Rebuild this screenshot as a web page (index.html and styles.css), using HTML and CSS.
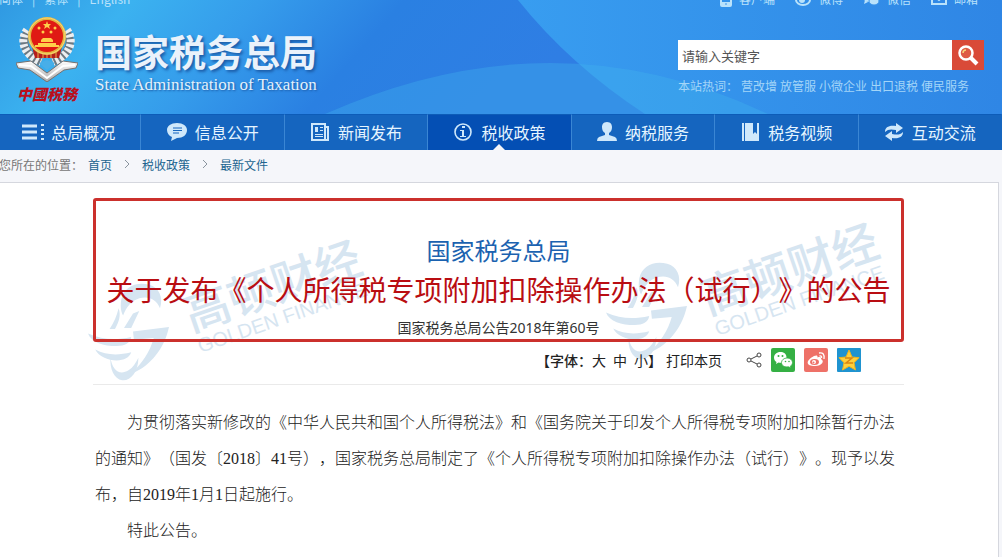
FILE: index.html
```html
<!DOCTYPE html>
<html lang="zh-CN">
<head>
    <meta charset="UTF-8">
    <meta name="viewport" content="width=device-width, initial-scale=1.0">
    <title>国家税务总局</title>
    <link rel="stylesheet" href="styles.css">
</head>
<body>

    <header class="header">
        <svg class="header-bg" viewBox="0 0 1002 114" preserveAspectRatio="none" aria-hidden="true">
            <defs>
                <linearGradient id="sky" x1="0" x2="1" y1="0" y2="0.1">
                    <stop offset="0" stop-color="#3099e2"/>
                    <stop offset="0.13" stop-color="#3bb2f0"/>
                    <stop offset="0.26" stop-color="#359ceb"/>
                    <stop offset="0.4" stop-color="#2a80e2"/>
                    <stop offset="0.6" stop-color="#2f7ee4"/>
                </linearGradient>
                <linearGradient id="sky2" x1="0" x2="1" y1="0" y2="0">
                    <stop offset="0" stop-color="#389df0"/>
                    <stop offset="1" stop-color="#2f86e5"/>
                </linearGradient>
            </defs>
            <rect width="1002" height="114" fill="url(#sky)"/>
            <path d="M518 0Q570 65 645 114H1002V0Z" fill="url(#sky2)"/>
            <path d="M325 114Q440 63 550 63Q660 63 768 114Z" fill="#42b4ee" opacity="0.35"/>
        </svg>

        <div class="topbar">
            <div class="langs">
                <a href="#">简体</a><span>|</span><a href="#">繁体</a><span>|</span><a href="#">English</a>
            </div>
            <div class="apps">
                <a href="#">
                    <svg width="12" height="16" viewBox="0 0 12 16"><rect x="1" y="1" width="10" height="14" rx="1" fill="none" stroke="currentColor" stroke-width="2"/><path d="M1 11h10v3H1z" fill="currentColor"/><path d="M5 13h2" stroke="#3a94ea"/></svg>客户端</a>
                <a href="#">
                    <svg width="17" height="16" viewBox="0 0 17 16"><ellipse cx="8" cy="9" rx="7" ry="5" fill="none" stroke="currentColor" stroke-width="2"/><circle cx="7" cy="9" r="3" fill="currentColor"/><path d="M11 1q5 0 5 5" fill="none" stroke="currentColor" stroke-width="2"/></svg>微博</a>
                <a href="#">
                    <svg width="17" height="16" viewBox="0 0 17 16"><ellipse cx="6" cy="6" rx="6" ry="5" fill="currentColor"/><path d="M2 9l-1 4 4-2z" fill="currentColor"/><ellipse cx="11" cy="10" rx="5" ry="4" fill="currentColor" stroke="#3a94ea"/></svg>微信</a>
                <a href="#">
                    <svg width="16" height="16" viewBox="0 0 16 16"><path d="M1 2h14v11H1zM1 3l7 6 7-6" fill="none" stroke="currentColor" stroke-width="2"/></svg>邮箱</a>
            </div>
        </div>

        <div class="brand">
            <div class="emblem">
                <svg width="62" height="66" viewBox="0 0 62 66" aria-hidden="true">
                    <defs>
                        <linearGradient id="silver" x1="0" x2="0" y1="0" y2="1">
                            <stop offset="0" stop-color="#ffffff"/>
                            <stop offset="1" stop-color="#a9a6a6"/>
                        </linearGradient>
                    </defs>
                    <!-- wheat ears -->
                    <g fill="none" stroke="#6d7880" stroke-width="8">
                        <path d="M12 15C4 26 9 39 25 46"/>
                        <path d="M50 15C58 26 53 39 37 46"/>
                    </g>
                    <g fill="none" stroke="#eceef0" stroke-width="8" stroke-dasharray="3 2">
                        <path d="M11 14C3 25 8 39 25 46"/>
                        <path d="M51 14C59 25 54 39 37 46"/>
                    </g>
                    <path d="M16 31h30l-3 11H19z" fill="#b51d1c"/>
                    <path d="M22 35v7M27 36v6M31 36v6M35 36v6M40 35v7" stroke="#e8b34d"/>
                    <circle cx="31" cy="20" r="19" fill="#e4b43f"/>
                    <circle cx="31" cy="20" r="18" fill="none" stroke="#f6d979"/>
                    <circle cx="31" cy="20" r="16" fill="#e01a14"/>
                    <g fill="#ffcf4a">
                        <path d="M31 5l1 3h3l-2 2 1 3-3-2-3 2 1-3-2-2h3z"/>
                        <circle cx="23" cy="12" r="1.5"/>
                        <circle cx="39" cy="12" r="1.5"/>
                        <circle cx="27" cy="16" r="1.5"/>
                        <circle cx="35" cy="16" r="1.5"/>
                        <path d="M25 24l2-2h8l2 2v2H25zM22 27h18v2h3v2H19v-2h3z"/>
                    </g>
                    <!-- ribbon -->
                    <path d="M0 47l15-2 16 12 16-12 15 2-2 5-12 2-17 12L14 54 2 52z" fill="url(#silver)" stroke="#77706d"/>
                    <path d="M3 49l12 1 16 12 16-12 12-1" fill="none" stroke="#fff" stroke-width="2"/>
                    <path d="M23 47l8-3 8 3-8 7z" fill="#48aee8"/>
                </svg>
                <span class="emblem-text">中國税務</span>
            </div>
            <div class="site-name">
                <h1>国家税务总局</h1>
                <p>State Administration of Taxation</p>
            </div>
            <div class="search">
                <form class="search-form" onsubmit="return false">
                    <input type="text" aria-label="搜索" placeholder="请输入关键字">
                    <button type="submit" aria-label="搜索">
                        <svg width="22" height="22" viewBox="0 0 22 22"><path d="M13 13l7 7" stroke="#fff" stroke-width="4"/><circle cx="9" cy="9" r="6.500" fill="#de5b45" stroke="#fff" stroke-width="2.5"/><path d="M6 9q0-3 3-3" fill="none" stroke="#f6d67c" stroke-width="1.5"/></svg>
                    </button>
                </form>
                <div class="hot">
                    <span>本站热词：</span>
                    <a href="#">营改增</a>
                    <a href="#">放管服</a>
                    <a href="#">小微企业</a>
                    <a href="#">出口退税</a>
                    <a href="#">便民服务</a>
                </div>
            </div>
        </div>
    </header>

    <nav class="nav">
        <a href="#">
            <svg viewBox="0 0 24 20"><path d="M1 4h15M1 10h15M1 16h15" stroke="currentColor" stroke-width="3"/><path d="M20 3h3M20 8h3M20 12h3M20 17h3" stroke="currentColor" stroke-width="2"/></svg>总局概况</a>
        <a href="#">
            <svg viewBox="0 0 24 20"><path d="M12 1c6 0 10 3 10 7 0 5-4 8-10 8l-6 3 1-4c-3-1-5-4-5-7 0-4 4-7 10-7z" fill="currentColor"/><path d="M8 6h9M8 8.500h9M8 11h6" stroke="#1565bf"/></svg>信息公开</a>
        <a href="#">
            <svg viewBox="0 0 24 20"><path d="M4 2h13v16H4zM17 5h3v13h-4" fill="none" stroke="currentColor" stroke-width="2"/><path d="M7 5h3v5H7zM12 5h3v1h-3zM12 8h3v1h-3zM7 12h8v1H7zM7 14h8v1H7z" fill="currentColor"/></svg>新闻发布</a>
        <a href="#" class="active">
            <svg viewBox="0 0 24 20"><circle cx="12" cy="10" r="8" fill="none" stroke="currentColor" stroke-width="1.600"/><path d="M11 4h3v2h-3zM9 8h4v6h2v1H9v-1h2V9H9z" fill="currentColor"/></svg>税收政策</a>
        <a href="#">
            <svg viewBox="0 0 24 20"><path d="M12 0c4 0 5 3 5 5 0 3-1 5-3 6v2l6 2q2 1 2 4H2q0-3 2-4l6-2v-2C8 10 7 8 7 5c0-2 1-5 5-5z" fill="currentColor"/></svg>纳税服务</a>
        <a href="#">
            <svg viewBox="0 0 24 20"><path d="M4 1h2v18H4zM7 1h8v11l2-2 2 2V1h2v18H7z" fill="currentColor"/></svg>税务视频</a>
        <a href="#">
            <svg viewBox="0 0 24 20"><path d="M3 10c0-5 4-7 11-6V1l7 5-7 5V8c-5-1-8-1-11 2zM21 10c0 5-4 7-11 6v3l-7-5 7-5v3c5 1 8 1 11-2z" fill="currentColor"/></svg>互动交流</a>
    </nav>

    <div class="crumbs">
        <span>您所在的位置：</span>
        <a href="#">首页</a>
        <svg width="6" height="10" viewBox="0 0 6 10"><path d="M1 1l4 4-4 4" fill="none" stroke="#8a949e"/></svg>
        <a href="#">税收政策</a>
        <svg width="6" height="10" viewBox="0 0 6 10"><path d="M1 1l4 4-4 4" fill="none" stroke="#8a949e"/></svg>
        <a href="#">最新文件</a>
    </div>

    <main class="panel">
        <article class="article">
            <!-- watermarks -->
            <svg class="watermark" width="820" height="200" viewBox="0 0 820 200" aria-hidden="true">
                <defs>
                    <g id="swirl">
                        <path d="M37 18C40 4 54-2 68 2c11 3 16 14 12 26C76 18 67 14 57 17c-9 3-14 9-18 19-3-5-3-12-2-18z"/>
                        <path d="M0 56c16 7 30 8 48 4-1 7-7 10-16 10C17 70 4 66 0 56z"/>
                        <path d="M8 74c12 6 24 7 40 3-2 6-8 9-16 9-10 0-20-4-24-12z"/>
                        <path d="M50 54l40-5c-6 28-25 46-44 53 14-12 23-26 27-41l-22 2z"/>
                        <path d="M25 83c2 14 10 20 20 14 5-3 8-8 11-14 0 16-9 26-18 25-9-1-14-13-13-25z"/>
                        <path d="M24 51c5-7 8-15 10-23 3 8 0 16-4 23zM40 50l10-16 7-3-9 19z"/>
                    </g>
                </defs>
                <g fill="#d6e5f1">
                    <use href="#swirl" transform="translate(0 85) scale(0.9)"/>
                    <g transform="translate(103 134) rotate(-19)">
                        <text class="mark-cn" x="0" y="0">高顿财经</text>
                        <text class="mark-en" x="2" y="23">GOLDEN FINANCE</text>
                    </g>
                    <use href="#swirl" transform="translate(518 64) scale(0.9)"/>
                    <g transform="translate(620 117) rotate(-19)">
                        <text class="mark-cn" x="0" y="0">高顿财经</text>
                        <text class="mark-en" x="2" y="23">GOLDEN FINANCE</text>
                    </g>
                </g>
            </svg>

            <div class="title-box">
                <p class="org">国家税务总局</p>
                <h2>关于发布《个人所得税专项附加扣除操作办法（试行）》的公告</h2>
                <p class="doc-no">国家税务总局公告2018年第60号</p>
            </div>

            <div class="tools">
                <div class="font-size">
                    <b>【字体：</b><button type="button">大</button><button type="button">中</button><button type="button">小</button><b>】</b>
                </div>
                <button type="button" class="print">打印本页</button>
                <div class="share">
                    <svg width="16" height="16" viewBox="0 0 16 16"><path d="M5 7l6-3M5 9l6 3" stroke="#444"/><g fill="none" stroke="#444"><circle cx="3" cy="8" r="2"/><circle cx="13" cy="3" r="2"/><circle cx="13" cy="13" r="2"/></g></svg>
                    <a href="#" aria-label="微信">
                        <svg width="24" height="24" viewBox="0 0 24 24"><rect width="24" height="24" rx="2" fill="#35b044"/><path d="M9.500 4C5.500 4 3 6.500 3 9.500c0 2 1 3.500 2.500 4.500L5 16l2.500-1.500c4 1 8-1 8-5S12.500 4 9.500 4z" fill="#fff"/><path d="M16 10c3 0 5.500 2 5.500 4.500 0 1.500-1 3-2 3.500l.5 2-2.500-1.200c-4 .7-7-1.300-7-4.300 0-2.500 2.500-4.500 5.500-4.500z" fill="#fff" stroke="#35b044" stroke-width=".8"/><g fill="#35b044"><circle cx="7.500" cy="8" r="1"/><circle cx="11.500" cy="8" r="1"/><circle cx="14.500" cy="13.500" r=".8"/><circle cx="18" cy="13.500" r=".8"/></g></svg>
                    </a>
                    <a href="#" aria-label="微博">
                        <svg width="24" height="24" viewBox="0 0 24 24"><rect width="24" height="24" rx="2" fill="#ee7168"/><path d="M10 8c2-1 4-1 3.500 1.500 3-1 4 0 3.500 1.500 4 2 1 7-6 7-9 0-10-5-1-10z" fill="#fff"/><ellipse cx="10.500" cy="14" rx="4.500" ry="3" fill="#ee7168"/><circle cx="10" cy="14" r="2" fill="#fff"/><circle cx="9.500" cy="14.500" r="1" fill="#ee7168"/><path d="M15 5q6-1 5 6M15.500 8q2.500-.5 2 2" fill="none" stroke="#fff" stroke-width="1.300"/></svg>
                    </a>
                    <a href="#" aria-label="QQ空间">
                        <svg width="24" height="24" viewBox="0 0 24 24"><rect width="24" height="24" rx="1" fill="#1f93d0"/><path d="M12 2l3 7 7 .7-5 5L18.500 22 12 18.300 5.500 22 7 14.700l-5-5L9 9z" fill="#ffd03b" stroke="#f0b41c"/><path d="M8 10h7l-6 5h7" fill="none" stroke="#d98512" stroke-width="1.500"/></svg>
                    </a>
                </div>
            </div>

            <div class="content">
                <p>为贯彻落实新修改的《中华人民共和国个人所得税法》和《国务院关于印发个人所得税专项附加扣除暂行办法的通知》（国发〔2018〕41号），国家税务总局制定了《个人所得税专项附加扣除操作办法（试行）》。现予以发布，自2019年1月1日起施行。</p>
                <p>特此公告。</p>
            </div>
        </article>
    </main>

</body>
</html>
```
FILE: styles.css
```css
* {
    box-sizing: border-box;
}
body {
    display: flex;
    flex-direction: column;
    min-height: 100vh;
    margin: 0;
    overflow-x: hidden;
    background-color: #f5f6fa;
    font-family: "Noto Sans CJK SC", sans-serif;
    font-size: 12px;
    text-spacing-trim: space-all;
}
a {
    color: inherit;
    text-decoration: none;
}
p, h1, h2 {
    margin: 0;
}
button {
    padding: 0;
    border: none;
    background: none;
    color: inherit;
    font: inherit;
    cursor: pointer;
}
svg {
    display: block;
    flex: none;
}

/* header */
.header {
    position: relative;
    overflow: hidden;
    background-color: #2f86e5;
    color: #fff;
}
.header-bg {
    position: absolute;
    inset: 0;
    width: 100%;
    height: 100%;
}
.topbar {
    position: relative;
    display: flex;
    justify-content: space-between;
    height: 16px;
    margin-top: -9px;
    padding-right: 24px;
    color: #b9e2fb;
    line-height: 16px;
}
.langs {
    display: flex;
    gap: 9px;
    margin-left: -1px;
}
.apps {
    display: flex;
    gap: 20px;
}
.apps a {
    display: flex;
    gap: 7px;
}
.brand {
    position: relative;
    display: flex;
    padding: 9px 18px 8px 16px;
}
.emblem {
    width: 62px;
}
.emblem-text {
    display: block;
    color: #b90f1c;
    font-size: 15px;
    font-style: italic;
    font-weight: 900;
    line-height: 24px;
    text-align: center;
    white-space: nowrap;
}
.site-name {
    flex: 1;
    padding: 15px 0 0 17px;
}
.site-name h1 {
    color: #eaf2fb;
    font-size: 37px;
    font-weight: 700;
    line-height: 40px;
    text-shadow: 2px 2px 3px #1c5ca8;
}
.site-name p {
    margin-top: 4px;
    color: #e3f1fc;
    font-family: "Liberation Serif", serif;
    font-size: 17px;
    line-height: 20px;
    text-shadow: 1px 1px 2px #1c5ca8;
}
.search {
    width: 306px;
    padding-top: 24px;
}
.search-form {
    display: flex;
    height: 30px;
}
.search-form input {
    flex: 1;
    min-width: 0;
    padding: 0 4px;
    border: none;
    border-radius: 0;
    background-color: #fff;
    font-family: inherit;
    font-size: 13px;
}
.search-form input::placeholder {
    color: #555;
}
.search-form button {
    display: flex;
    align-items: center;
    justify-content: center;
    width: 32px;
    background-color: #d94a38;
}
.hot {
    display: flex;
    gap: 3px;
    color: #a3d5f8;
    line-height: 32px;
    white-space: nowrap;
}

/* main menu */
.nav {
    display: flex;
    margin: 0 1px 0 -2px;
    background-color: #1565bf;
    box-shadow: 4px 0 #1565bf;
}
.nav a {
    position: relative;
    display: flex;
    flex: 1;
    align-items: center;
    justify-content: center;
    gap: 6px;
    height: 36px;
    padding: 0 2px 2px 0;
    border-top: 1px solid #0d5cb8;
    border-right: 1px solid #3a86d4;
    color: #e6f5ff;
    font-size: 16px;
}
.nav a:last-child {
    border-right: none;
}
.nav a:hover, .nav .active {
    background-color: #044fb4;
}
.nav svg {
    width: 24px;
    height: 20px;
    color: #cfe8fb;
}
.nav .active::after {
    content: "";
    position: absolute;
    bottom: 0;
    left: 50%;
    margin-left: -6px;
    border: 6px solid transparent;
    border-top: none;
    border-bottom-color: #f5f6fa;
}

/* breadcrumb */
.crumbs {
    display: flex;
    align-items: center;
    gap: 12px;
    height: 32px;
    margin-left: -1px;
    padding-bottom: 4px;
    color: #777;
}
.crumbs span {
    margin-right: -7px;
}
.crumbs a {
    color: #21648f;
}

/* article */
.panel {
    flex: 1;
    margin-right: 3px;
    padding: 15px 94px 8px 93px;
    border: 1px solid #d5d7de;
    border-left: none;
    background-color: #fff;
}
.article {
    position: relative;
}
.watermark {
    position: absolute;
    top: 0;
    left: -5px;
}
.mark-cn {
    font-size: 46px;
    font-weight: 500;
}
.mark-en {
    font-family: "Liberation Sans", sans-serif;
    font-size: 20px;
}
.title-box {
    position: relative;
    padding-top: 31px;
    border: 3px solid #cb302c;
    border-radius: 3px;
    text-align: center;
}
.org {
    color: #1b62b0;
    font-size: 24px;
    line-height: 36px;
}
.title-box h2 {
    color: #b90d12;
    font-size: 28px;
    font-weight: 400;
    line-height: 42px;
    white-space: nowrap;
}
.doc-no {
    padding-top: 7px;
    color: #333;
    font-family: "Noto Sans", "Noto Sans CJK SC", sans-serif;
    font-size: 14px;
    line-height: 22px;
}
.tools {
    position: relative;
    display: flex;
    align-items: center;
    justify-content: flex-end;
    height: 43px;
    padding: 0 43px 6px 0;
    border-bottom: 1px solid #eaeaea;
    color: #222;
    font-size: 14px;
}
.font-size {
    display: flex;
    align-items: center;
}
.font-size b {
    font-weight: 500;
}
.font-size button + button {
    margin-left: 7px;
}
.print {
    margin: 0 24px 0 4px;
}
.share {
    display: flex;
    align-items: center;
    gap: 9px;
}
.content {
    position: relative;
    padding: 20px 2px 0;
    color: #222;
    font-family: "Liberation Serif", "Noto Sans CJK SC", serif;
    font-size: 16px;
    font-weight: 300;
    line-height: 36px;
}
.content p {
    text-indent: 2em;
}
```
